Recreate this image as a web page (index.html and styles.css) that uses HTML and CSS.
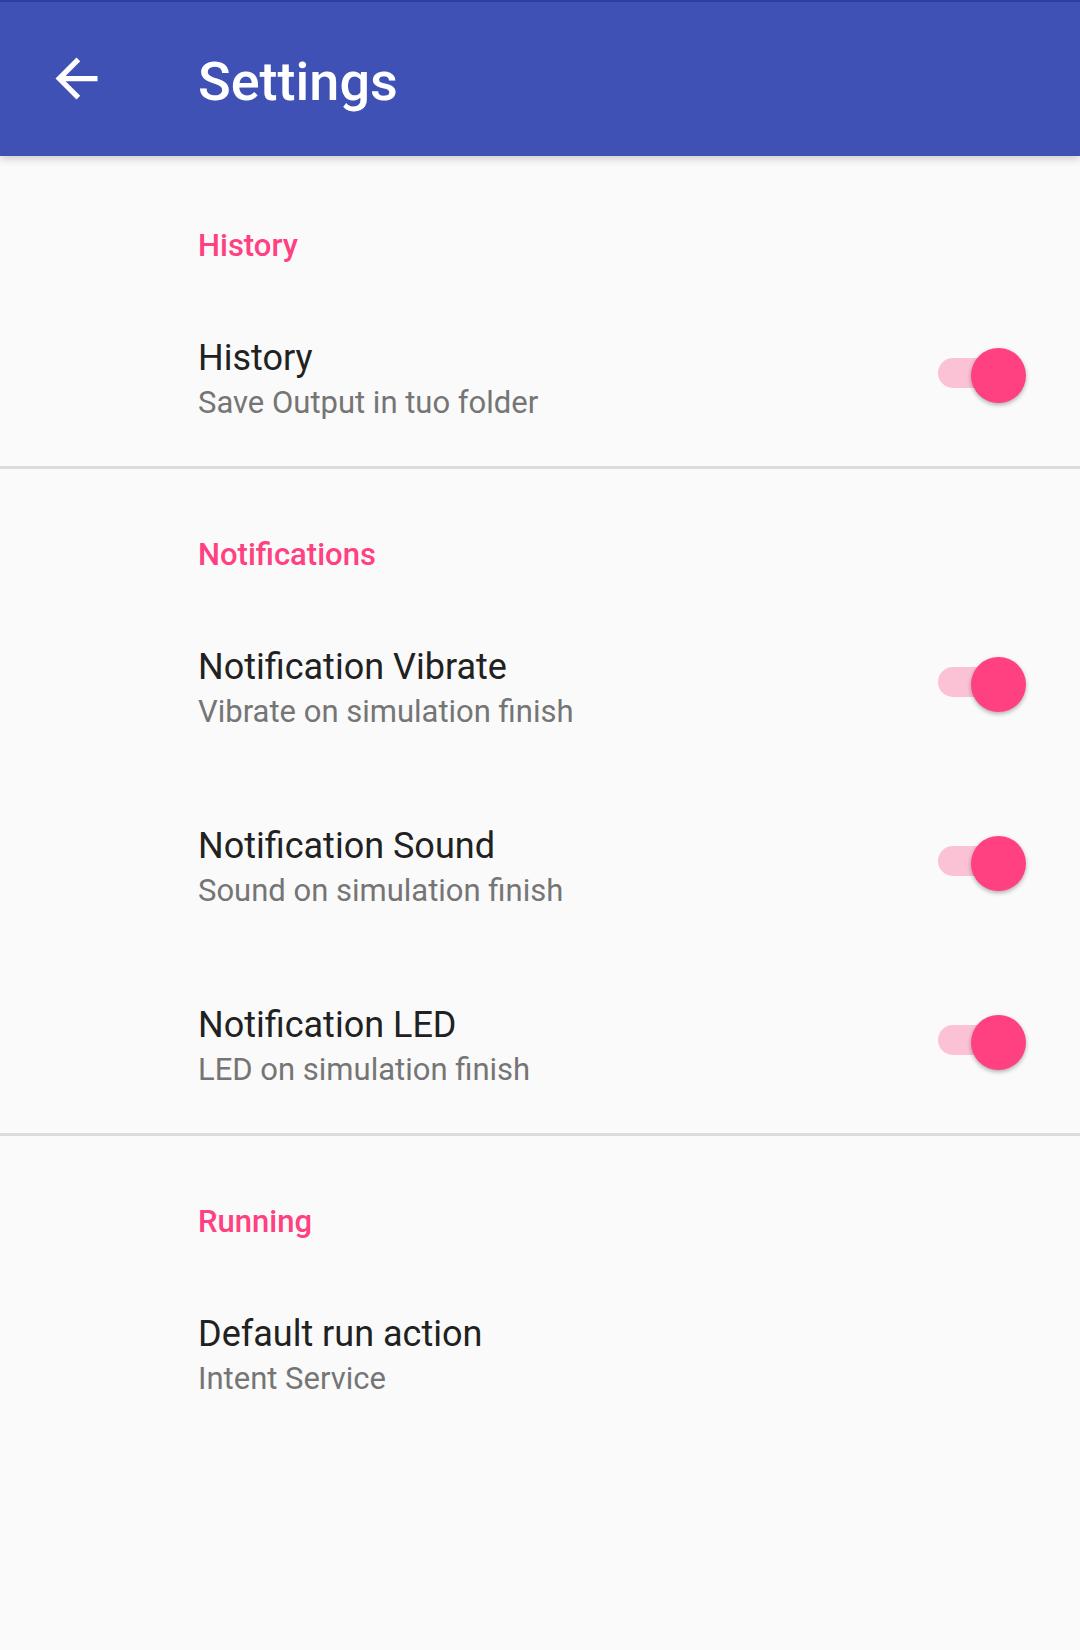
FILE: index.html
```html
<!DOCTYPE html>
<html lang="en">
<head>
<meta charset="utf-8">
<title>Settings</title>
<link rel="stylesheet" href="styles.css">
</head>
<body>
<header class="appbar">
  <svg class="back" viewBox="0 0 24 24" aria-hidden="true"><path d="M20 11H7.83l5.59-5.59L12 4l-8 8 8 8 1.41-1.41L7.83 13H20v-2z"/></svg>
  <h1 class="appbar-title">Settings</h1>
</header>
<main class="prefs">
  <section class="group">
    <h2 class="group-title">History</h2>
    <div class="pref">
      <div class="pref-text">
        <div class="pref-title">History</div>
        <div class="pref-summary">Save Output in tuo folder</div>
      </div>
      <span class="switch"><span class="track"></span><span class="thumb"></span></span>
    </div>
  </section>
  <section class="group">
    <h2 class="group-title">Notifications</h2>
    <div class="pref">
      <div class="pref-text">
        <div class="pref-title">Notification Vibrate</div>
        <div class="pref-summary">Vibrate on simulation finish</div>
      </div>
      <span class="switch"><span class="track"></span><span class="thumb"></span></span>
    </div>
    <div class="pref">
      <div class="pref-text">
        <div class="pref-title">Notification Sound</div>
        <div class="pref-summary">Sound on simulation finish</div>
      </div>
      <span class="switch"><span class="track"></span><span class="thumb"></span></span>
    </div>
    <div class="pref">
      <div class="pref-text">
        <div class="pref-title">Notification LED</div>
        <div class="pref-summary">LED on simulation finish</div>
      </div>
      <span class="switch"><span class="track"></span><span class="thumb"></span></span>
    </div>
  </section>
  <section class="group group-last">
    <h2 class="group-title">Running</h2>
    <div class="pref">
      <div class="pref-text">
        <div class="pref-title">Default run action</div>
        <div class="pref-summary">Intent Service</div>
      </div>
    </div>
  </section>
</main>
</body>
</html>
```

FILE: styles.css
```css
html, body {
  margin: 0;
  padding: 0;
}

body {
  background: #fafafa;
  font-family: Roboto, "Noto Sans", "Liberation Sans", sans-serif;
  width: 1080px;
  min-height: 1650px;
}

.appbar {
  position: relative;
  z-index: 1;
  box-sizing: border-box;
  height: 156px;
  border-top: 2px solid #303f9f;
  background: #3f51b5;
  display: flex;
  align-items: center;
  padding-left: 45px;
  box-shadow: 0 3px 8px rgba(0, 0, 0, 0.18);
}

.back {
  width: 63px;
  height: 63px;
  fill: #ffffff;
  flex: none;
  margin-bottom: 2px;
}

.appbar-title {
  margin: 6px 0 0 90px;
  font-size: 54px;
  line-height: 56px;
  font-weight: 500;
  color: #ffffff;
}

.prefs {
  padding-top: 4px;
}

.group {
  padding-top: 64px;
  border-bottom: 3px solid #dcdcdc;
}

.group-last {
  border-bottom: none;
}

.group-title {
  margin: 0;
  padding: 0 0 21px 198px;
  font-size: 31px;
  line-height: 44px;
  font-weight: 500;
  color: #ff4081;
}

.pref {
  display: flex;
  align-items: center;
  padding: 47px 0 43px 198px;
}

.pref:last-child {
  padding-bottom: 41px;
}

.pref-text {
  flex: 1;
}

.pref-title {
  font-size: 36px;
  line-height: 44px;
  color: #212121;
}

.pref-summary {
  font-size: 31px;
  line-height: 45px;
  color: #757575;
}

.switch {
  position: relative;
  flex: none;
  width: 88px;
  height: 55px;
  margin-right: 54px;
  margin-bottom: 10px;
}

.track {
  position: absolute;
  left: 0;
  top: 10px;
  width: 78px;
  height: 30px;
  border-radius: 15px;
  background: #fbc1d5;
}

.thumb {
  position: absolute;
  right: 0;
  top: 0;
  width: 55px;
  height: 55px;
  border-radius: 50%;
  background: #ff4081;
  box-shadow: 0 2px 4px rgba(0, 0, 0, 0.3);
}
```
